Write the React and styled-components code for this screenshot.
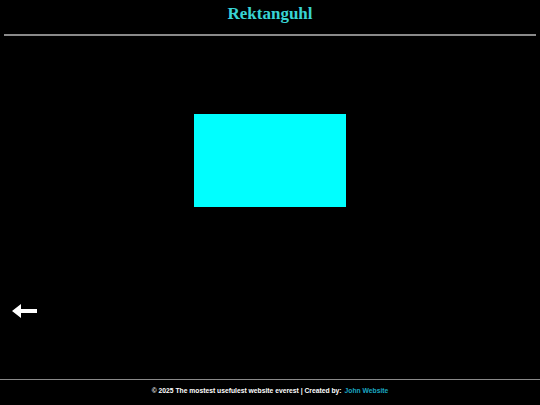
import React from 'react';
import styled, { createGlobalStyle } from 'styled-components';

const GlobalStyle = createGlobalStyle`
  html, body {
    margin: 0;
    padding: 0;
    background: #000;
  }
  #root {
    min-height: 100vh;
  }
`;

const Page = styled.div`
  display: flex;
  flex-direction: column;
  height: 100vh;
  background: #000;
  color: #fff;
`;

const Header = styled.header`
  padding: 0 4px;
`;

const Title = styled.h1`
  margin: 0;
  padding-top: 4px;
  height: 30px;
  text-align: center;
  font-family: 'Liberation Serif', 'Times New Roman', serif;
  font-weight: 700;
  font-size: 17px;
  line-height: 20px;
  color: #38d4d4;
`;

const Rule = styled.hr`
  margin: 0;
  border: none;
  height: 2px;
  background: #8a8a8a;
`;

const Main = styled.main`
  flex: 1;
  display: flex;
  flex-direction: column;
  padding-top: 78px;
`;

const Rect = styled.div`
  align-self: center;
  width: 152px;
  height: 93px;
  background: #00ffff;
`;

const BackBtn = styled.button`
  all: unset;
  display: flex;
  margin: 97px 0 0 12px;
  width: 26px;
  height: 14px;
  cursor: pointer;
`;

const Footer = styled.footer`
  height: 21px;
  padding-bottom: 4px;
  border-top: 1px solid #8a8a8a;
  display: flex;
  align-items: center;
  justify-content: center;
  font-family: 'Liberation Sans', Arial, sans-serif;
  font-weight: 700;
  font-size: 6.75px;
  color: #fff;
`;

const Link = styled.a`
  color: #1aa7c2;
  text-decoration: none;
  margin-left: 3px;
`;

function App() {
  return (
    <>
      <GlobalStyle />
      <Page>
        <Header>
          <Title>Rektanguhl</Title>
          <Rule />
        </Header>
        <Main>
          <Rect />
          <BackBtn aria-label='Back'>
            <svg width='26' height='14' viewBox='0 0 26 14'>
              <polygon points='0,7 9,0 9,5 25,5 25,9 9,9 9,14' fill='#fff' />
            </svg>
          </BackBtn>
        </Main>
        <Footer>
          © 2025 The mostest usefulest website everest | Created by:
          <Link href='#'>John Website</Link>
        </Footer>
      </Page>
    </>
  );
}

export default App;
